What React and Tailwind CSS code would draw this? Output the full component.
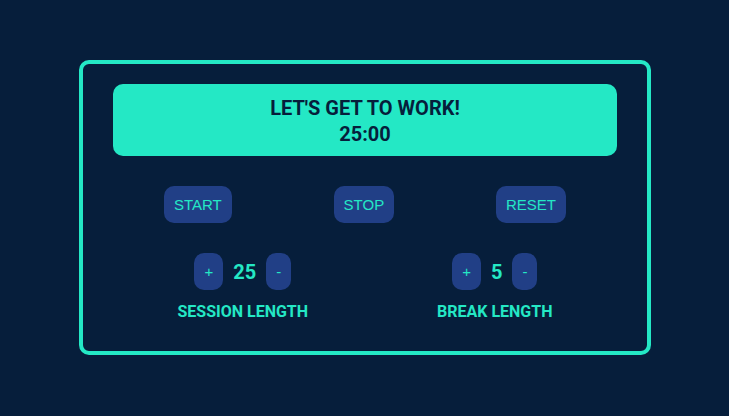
import { useState } from "react";

function Button({ children, ...props }) {
  return (
    <button
      type="button"
      className="rounded-[10px] bg-[#213f86] p-2.5 font-['Liberation_Sans',Arial,sans-serif] text-[15px] leading-[17px] font-normal text-[#24e8c5]"
      {...props}
    >
      {children}
    </button>
  );
}

function LengthControl({ label, value, onChange }) {
  return (
    <section className="flex flex-col items-center gap-3" aria-label={label}>
      <div className="flex items-center gap-2.5">
        <Button aria-label={`Increase ${label}`} onClick={() => onChange(value + 1)}>
          +
        </Button>
        <span className="text-xl leading-[26px]">{value}</span>
        <Button aria-label={`Decrease ${label}`} onClick={() => onChange(Math.max(1, value - 1))}>
          -
        </Button>
      </div>
      <h2 className="text-base leading-[19px]">{label}</h2>
    </section>
  );
}

export default function App() {
  const [session, setSession] = useState(25);
  const [rest, setRest] = useState(5);

  return (
    <div className="flex min-h-screen items-start justify-center bg-[#061e3b] py-[60px] pr-4 pl-[17px] font-[Roboto,sans-serif] font-bold text-[#24e8c5]">
      <main className="w-full max-w-[572px] rounded-[10px] border-4 border-[#24e8c5] px-[30px] pt-5 pb-[30px]">
        <header className="rounded-[10px] bg-[#24e8c5] px-2.5 pt-[11px] pb-[9px] text-center text-xl leading-[26px] text-[#061e3b]">
          <h1>LET'S GET TO WORK!</h1>
          <p>{session}:00</p>
        </header>
        <div className="mt-[30px] flex justify-around">
          <Button>START</Button>
          <Button>STOP</Button>
          <Button>RESET</Button>
        </div>
        <div className="mt-[30px] flex justify-around">
          <LengthControl label="SESSION LENGTH" value={session} onChange={setSession} />
          <LengthControl label="BREAK LENGTH" value={rest} onChange={setRest} />
        </div>
      </main>
    </div>
  );
}
